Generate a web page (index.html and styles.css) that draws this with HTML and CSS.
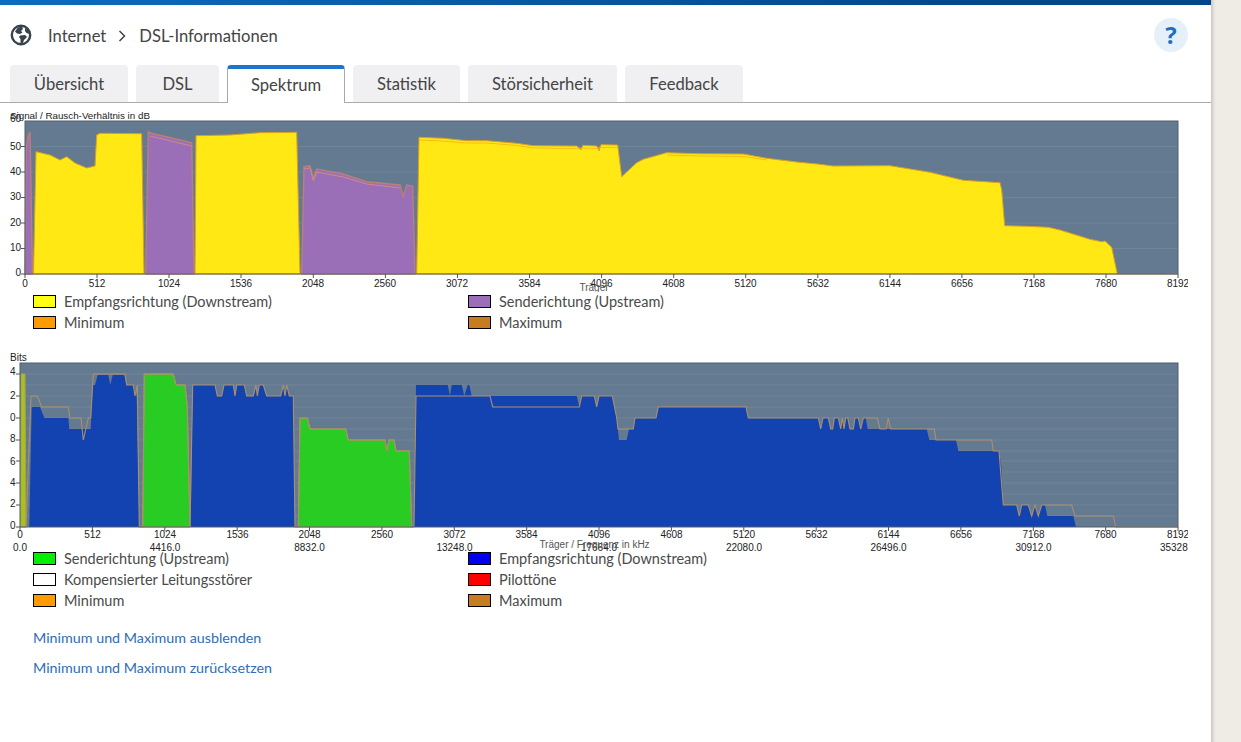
FILE: index.html
```html
<!DOCTYPE html>
<html lang="de">
<head>
<meta charset="utf-8">
<title>DSL-Informationen</title>
<link rel="stylesheet" href="styles.css">
</head>
<body>
<div class="page">
<main class="main">
<div class="topbar"></div>
<header class="head">
<svg class="globe" viewBox="0 0 22 22" width="22" height="22">
<circle cx="11" cy="11" r="9.2" fill="#fff" stroke="#38424c" stroke-width="2.4"/>
<path d="M5 7.5 8 3.5 12 2.5 13 5 11 7 12.5 8.500 10 10 7 9.5Z M10 11.5 15 11 17 13 14 16 12.5 20 10.5 19 10.5 15 9 13Z M15 4 19 7 19.5 10 16.5 9 15 7Z" fill="#38424c"/>
</svg>
<nav class="crumbs">
<span>Internet</span>
<svg class="chev" viewBox="0 0 8 12" width="8" height="12"><path d="M1.5 1 6.5 6 1.5 11" fill="none" stroke="#444" stroke-width="1.5"/></svg>
<span>DSL-Informationen</span>
</nav>
<a class="help">?</a>
</header>
<div class="tabs">
<a class="tab">Übersicht</a>
<a class="tab">DSL</a>
<a class="tab active">Spektrum</a>
<a class="tab">Statistik</a>
<a class="tab">Störsicherheit</a>
<a class="tab">Feedback</a>
</div>

<svg class="chart chart-a" viewBox="10 108 1178 184" width="1178" height="184">
<rect x="25" y="121" width="1153" height="153" class="plot"/>
<path class="grid" d="M25 146.5H1178M25 172H1178M25 197.500H1178M25 223H1178M25 248.500H1178"/>
<g>
<polygon class="up" points="25,274 26,150 28,137 30,132 32.500,274"/>
<polygon class="up" points="145.700,274 148.300,131.700 150,133 166.700,136.700 191.700,142.700 194,274"/>
<polygon class="up" points="301.700,274 304,166.700 310,165.700 313.300,178.300 316.700,169 343,174 366.700,181.700 400,185 403.300,196.700 406.700,185 412.700,186 415,274"/>
</g>
<path class="min-up" d="M150 136 166.700 140 191.700 146M304 169 310 168 313.300 181 316.700 172 343 177 366.700 184 400 188"/>
<polygon class="down" points="33.500,274 36,151.700 50,155 60,160 66.700,156.700 75,163 86.700,168 95,166 96.700,135 100,133.300 141.700,133.700 144,274"/>
<polygon class="down" points="195,274 196,135.700 230,135 260,132.700 296.700,132.300 300,274"/>
<polygon class="down" points="416.700,274 419,137.300 443.300,138.300 466.700,140.700 486.700,140.700 516.700,143.300 533,145.700 576.700,146 581,150 583,145.300 596.700,146 599,150.700 601,144.700 617.700,145 621.700,176.700 636.700,162.700 643.300,159.300 666.700,152.700 700,153.700 743.300,154 766.700,158.300 796.700,162 820,164.300 833,166 890,165.700 930,172.300 963.300,180.300 1000,182.700 1001.700,190 1004.700,225.700 1026.700,226.300 1048.300,227.300 1060,230 1090,239.300 1101.700,241.700 1105,241 1111.700,247.300 1117.300,274"/>
<path class="min-down" d="M419 140 443.300 141 466.700 143 486.700 143 516.700 145.500 533 148 576.700 148.500 583 148 596.700 148.500 601 147.500 617.700 147.500M666.700 155 700 156 743.300 156.500 766.700 160"/>
<path class="base" d="M1117 274H1178"/>
<rect x="25" y="121" width="1153" height="153" class="frame"/>
<path class="ticks" d="M25 274V278M97 274V278M169 274V278M241 274V278M313.300 274V278M385.400 274V278M457.500 274V278M529.500 274V278M601.600 274V278M673.700 274V278M745.700 274V278M817.800 274V278M889.900 274V278M961.900 274V278M1034 274V278M1106 274V278M1178 274V278M21 274H25M21 248.500H25M21 223H25M21 197.500H25M21 172H25M21 146.500H25"/>
<text class="tk title" x="10" y="119">Signal / Rausch-Verhältnis in dB</text>
<text class="tk end" x="21" y="122">60</text>
<text class="tk end" x="21" y="149.500">50</text>
<text class="tk end" x="21" y="175">40</text>
<text class="tk end" x="21" y="199.500">30</text>
<text class="tk end" x="21" y="225.500">20</text>
<text class="tk end" x="21" y="250.500">10</text>
<text class="tk end" x="21" y="275.500">0</text>
<text class="tk mid" x="25" y="287">0</text>
<text class="tk mid" x="97" y="287">512</text>
<text class="tk mid" x="169" y="287">1024</text>
<text class="tk mid" x="241" y="287">1536</text>
<text class="tk mid" x="313" y="287">2048</text>
<text class="tk mid" x="385" y="287">2560</text>
<text class="tk mid" x="457" y="287">3072</text>
<text class="tk mid" x="529.500" y="287">3584</text>
<text class="tk mid" x="601.500" y="287">4096</text>
<text class="tk mid" x="673.500" y="287">4608</text>
<text class="tk mid" x="745.500" y="287">5120</text>
<text class="tk mid" x="818" y="287">5632</text>
<text class="tk mid" x="890" y="287">6144</text>
<text class="tk mid" x="962" y="287">6656</text>
<text class="tk mid" x="1034" y="287">7168</text>
<text class="tk mid" x="1106" y="287">7680</text>
<text class="tk mid" x="1178" y="287">8192</text>
<text class="tk mid soft" x="594" y="290.500">Träger</text>
</svg>

<div class="legend legend-a">
<div class="key"><i class="sw s-yellow"></i>Empfangsrichtung (Downstream)</div>
<div class="key"><i class="sw s-purple"></i>Senderichtung (Upstream)</div>
<div class="key"><i class="sw s-orange"></i>Minimum</div>
<div class="key"><i class="sw s-brown"></i>Maximum</div>
</div>

<svg class="chart chart-b" viewBox="10 351 1178 200" width="1178" height="200">
<rect x="20" y="362" width="1158" height="164" class="plot"/>
<path class="grid" d="M20 373H1178M20 384H1178M20 395H1178M20 406H1178M20 417H1178M20 428H1178M20 439H1178M20 450H1178M20 460H1178M20 471H1178M20 482H1178M20 493H1178M20 504H1178M20 515H1178"/>
<polygon class="bmix" points="20.500,526 21,373 25,373 26,526"/>
<polygon class="bup" points="142.700,526 144.300,373 173.300,373 176,384 185,384 187.300,405 190,526"/>
<polygon class="bup" points="298.300,526 300,417 307.300,417 310,428 345.700,428 348.300,439 385,439 386.700,450 389,439 394,439 396,450 409.300,450 411.700,526"/>
<polygon class="bdown" points="29.300,526 31.700,406 40,406 44.300,417 68.300,417 69.300,428 90.700,428 92.700,384 95,384 97.700,374 108.300,374 110.300,384 112.700,374 124.300,374 126.700,384 132.700,384 136.700,395 139.300,526"/>
<polygon class="bdown" points="190.700,526 192.700,384 215,384 217.300,395 221.700,395 224,384 233.300,384 235,395 236.700,384 244.300,384 246.700,395 253.300,395 256,384 257.300,395 259.300,384 263.300,384 266.700,395 280.700,395 283.300,384 285,395 286.700,384 289.300,395 293.300,395 293.300,384 295,526"/>
<polygon class="bdown" points="414,526 416,384 447.700,384 450,395 451.700,384 461.700,384 464.300,395 467.700,384 469.300,384 471.700,395 576.700,395 579.300,406 581.700,395 594.300,395 596.700,406 599,395 612.300,395 616.700,417 619,439 626.700,439 629,428 633.300,428 635,417 656,417 658.300,406 746,406 748.300,417 818.300,417 820.700,428 823,417 828.300,417 830.700,428 832.700,428 834.300,417 838.300,417 840.700,428 842.300,417 844,428 845.700,417 847.700,417 850,428 853.300,428 855,417 858.300,417 860.700,428 863.300,417 865.700,417 867.700,428 926.700,428 929.300,439 956,439 958.300,450 999,450 1001.300,465 1003.300,504 1016.700,504 1019.300,515 1021.700,504 1028.300,504 1031.700,515 1035,504 1038.300,515 1041.700,504 1045,504 1047.300,515 1073.300,515 1076,526"/>
<polyline class="maxline" points="26,526 31,395 37.300,395 41.700,406 68.300,406 70,417 81,417 83.300,439 88.300,417 90.700,417 93.300,373 125,373 126.700,384 133.300,384 135,395 137.300,384 139.300,526 142.700,526 144.300,373 173.300,373 176,384 185,384 187.300,405 190,526 192.700,384 215,384 217.300,395 221.700,395 224,384 233.300,384 235,395 236.700,384 244.300,384 246.700,395 253.300,395 256,384 257.300,395 259.300,384 263.300,384 266.700,395 280.700,395 283.300,384 285,395 286.700,384 289.300,395 293.300,395 295,526 298.300,526 300,417 307.300,417 310,428 345.700,428 348.300,439 385,439 386.700,450 389,439 394,439 396,450 409.300,450 411.700,526 414,526 416,395 490,395 492.700,406 576.700,406 579.300,406 581.700,395 594.300,395 596.700,406 599,395 612.300,395 616.700,417 618,428 630,428 633.300,428 635,417 656,417 658.300,406 746,406 748.300,417 818.300,417 820.700,428 823,417 828.300,417 830.700,428 832.700,428 834.300,417 838.300,417 840.700,428 842.300,417 844,428 845.700,417 847.700,417 850,428 853.300,428 855,417 858.300,417 860.700,428 863.300,417 877.300,417 880,428 886,428 888.300,417 890.700,428 934.300,428 936,439 991.700,439 993.300,450 999,450 1003.300,504 1016.700,504 1019.300,515 1021.700,504 1028.300,504 1031.700,515 1035,504 1038.300,515 1041.700,504 1071.700,504 1075,515 1113.300,515 1115.700,526 1178,526"/>
<rect x="20" y="362" width="1158" height="164" class="frame"/>
<path class="ticks" d="M20 526V530M92.400 526V530M164.800 526V530M237.200 526V530M309.500 526V530M381.900 526V530M454.300 526V530M526.700 526V530M599 526V530M671.400 526V530M743.800 526V530M816.200 526V530M888.500 526V530M960.900 526V530M1033.300 526V530M1105.700 526V530M1178 526V530M16 526H20M16 504H20M16 482H20M16 460H20M16 439H20M16 417H20M16 395H20M16 373H20"/>
<text class="tk" x="10" y="360">Bits</text>
<text class="tk end" x="15.500" y="374">14</text>
<text class="tk end" x="15.500" y="397.500">12</text>
<text class="tk end" x="15.500" y="419.500">10</text>
<text class="tk end" x="15.500" y="441">8</text>
<text class="tk end" x="15.500" y="463.500">6</text>
<text class="tk end" x="15.500" y="484.500">4</text>
<text class="tk end" x="15.500" y="505.500">2</text>
<text class="tk end" x="15.500" y="527.500">0</text>
<text class="tk mid" x="20" y="537">0</text>
<text class="tk mid" x="92.500" y="537">512</text>
<text class="tk mid" x="165" y="537">1024</text>
<text class="tk mid" x="237.500" y="537">1536</text>
<text class="tk mid" x="309.500" y="537">2048</text>
<text class="tk mid" x="382" y="537">2560</text>
<text class="tk mid" x="454.500" y="537">3072</text>
<text class="tk mid" x="526.500" y="537">3584</text>
<text class="tk mid" x="599" y="537">4096</text>
<text class="tk mid" x="671.500" y="537">4608</text>
<text class="tk mid" x="744" y="537">5120</text>
<text class="tk mid" x="816.500" y="537">5632</text>
<text class="tk mid" x="888.500" y="537">6144</text>
<text class="tk mid" x="961" y="537">6656</text>
<text class="tk mid" x="1033.500" y="537">7168</text>
<text class="tk mid" x="1105.500" y="537">7680</text>
<text class="tk mid" x="1178" y="537">8192</text>
<text class="tk mid" x="20" y="549.500">0.0</text>
<text class="tk mid" x="165" y="549.500">4416.0</text>
<text class="tk mid" x="309.500" y="549.500">8832.0</text>
<text class="tk mid" x="454.500" y="549.500">13248.0</text>
<text class="tk mid" x="599" y="549.500">17664.0</text>
<text class="tk mid" x="744" y="549.500">22080.0</text>
<text class="tk mid" x="888.500" y="549.500">26496.0</text>
<text class="tk mid" x="1033.500" y="549.500">30912.0</text>
<text class="tk mid" x="1178" y="549.500">35328.0</text>
<text class="tk mid soft" x="594.500" y="546.500">Träger / Frequenz in kHz</text>
</svg>

<div class="legend legend-b">
<div class="key"><i class="sw s-green"></i>Senderichtung (Upstream)</div>
<div class="key"><i class="sw s-blue"></i>Empfangsrichtung (Downstream)</div>
<div class="key"><i class="sw s-white"></i>Kompensierter Leitungsstörer</div>
<div class="key"><i class="sw s-red"></i>Pilottöne</div>
<div class="key"><i class="sw s-orange"></i>Minimum</div>
<div class="key"><i class="sw s-brown"></i>Maximum</div>
</div>

<div class="links">
<a class="link">Minimum und Maximum ausblenden</a>
<a class="link">Minimum und Maximum zurücksetzen</a>
</div>
</main>
<div class="gutter"></div>
</div>
</body>
</html>
```
FILE: styles.css
```css
* { box-sizing: border-box; }
html, body { margin: 0; height: 100%; overflow: hidden; }
body { background: #efece5; font-family: "Lato", "Liberation Sans", sans-serif; color: #444; }
.page { display: flex; height: 742px; }
.main { width: 1211px; flex: none; background: #fff; }
.gutter { flex: 1; background: linear-gradient(90deg, #c9c6be 0, #e6e3dc 3px, #efece5 5px); }
.topbar { height: 5px; background: linear-gradient(90deg, #0d6cbd, #00468a 85%); }

.head { display: flex; align-items: center; height: 60px; padding: 0 23px 2px 10px; }
.globe { flex: none; margin-top: 2px; }
.crumbs { display: flex; align-items: center; gap: 11px; margin-left: 16px; padding-top: 3px; font-size: 16.600px; color: #444; }
.chev { flex: none; margin: 0 2px 0 1px; }
.help { margin-left: auto; width: 34px; height: 34px; margin-top: 2px; border-radius: 50%; background: #e6f0f9; color: #1c6fc4; font: 700 24px/34px "Open Sans", sans-serif; text-align: center; }

.tabs { display: grid; grid-template-columns: 118px 83px 118px 107px 149px 118px; column-gap: 8px; height: 38px; padding-left: 10px; border-bottom: 1px solid #aaa; }
.tab { display: flex; align-items: center; justify-content: center; height: 37px; background: #f0f0f2; border-radius: 4px 4px 0 0; font-size: 16.600px; color: #444; }
.tab.active { height: 38px; padding-bottom: 3px; background: #fff; border: 1px solid #aaa; border-top: 4px solid #1a75cf; border-bottom: 0; }

.chart { display: block; margin: 5px 0 0 10px; overflow: hidden; }
.plot { fill: #647a90; }
.grid { stroke: #70849a; stroke-width: 1; fill: none; }
.frame { fill: none; stroke: #535f6b; stroke-width: 1; }
.ticks { stroke: #555; stroke-width: 1; fill: none; }
.up { fill: #9b6fb8; stroke: #bb7f78; stroke-width: 1.400; }
.down { fill: #ffe814; stroke: #d9a020; stroke-width: 1; }
.min-up { fill: none; stroke: #c98c8a; stroke-width: 1; }
.min-down { fill: none; stroke: #f2bf14; stroke-width: 1; }
.base { fill: none; stroke: #b3853f; stroke-width: 1; }
.bup { fill: #28cc22; stroke: #a9a24a; stroke-width: 1; }
.bmix { fill: #a8c020; stroke: #a9a24a; stroke-width: 1; }
.bdown { fill: #1243b0; }
.maxline { fill: none; stroke: #ad8f6c; stroke-width: 1.100; }
.tk { font: 10px "Liberation Sans", sans-serif; fill: #222; }
.title { font-size: 9.800px; }
.end { text-anchor: end; }
.mid { text-anchor: middle; }
.soft { fill: #555; }

.legend { display: grid; grid-template-columns: 435px 1fr; grid-auto-rows: 21px; padding-left: 33px; }
.legend-a { margin-top: -1px; margin-bottom: 19px; }
.legend-b { margin-top: -4px; }
.key { display: flex; align-items: center; gap: 8px; font-size: 14.500px; color: #4a4a4a; white-space: nowrap; }
.sw { flex: none; width: 23px; height: 13px; border: 1px solid #000; }
.s-yellow { background: #ffff14; }
.s-purple { background: #9b6fb8; }
.s-orange { background: #ff9a00; }
.s-brown { background: #c87c20; }
.s-green { background: #00ee00; }
.s-blue { background: #0000ee; }
.s-white { background: #fff; }
.s-red { background: #ff0000; }

.links { display: flex; flex-direction: column; gap: 10px; margin: 17px 0 0 33px; }
.link { font-size: 14.300px; line-height: 20px; color: #2f6db5; }
```
